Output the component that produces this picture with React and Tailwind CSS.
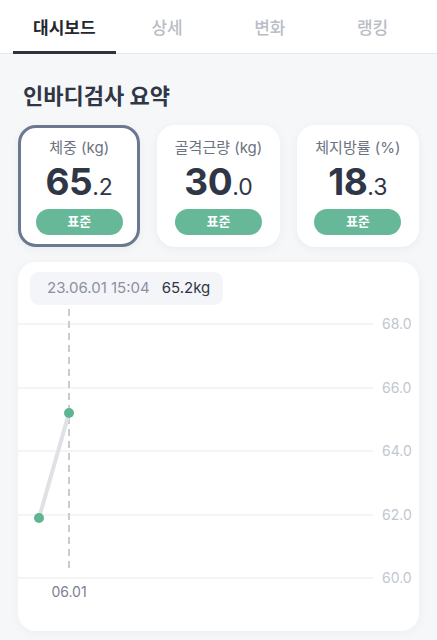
import React from "react";

const tabs = ["대시보드", "상세", "변화", "랭킹"];

const stats = [
  { label: "체중 (kg)", whole: "65", frac: ".2", active: true },
  { label: "골격근량 (kg)", whole: "30", frac: ".0" },
  { label: "체지방률 (%)", whole: "18", frac: ".3" },
];

const grid = [
  { y: 19, v: "68.0" },
  { y: 83, v: "66.0" },
  { y: 146, v: "64.0" },
  { y: 210, v: "62.0" },
  { y: 273, v: "60.0" },
];

const StatCard = ({ label, whole, frac, active }) => (
  <div
    className={`w-[123px] h-[122px] rounded-[18px] bg-white flex flex-col items-center shadow-[0_2px_10px_rgba(0,0,0,0.05)] ${
      active ? "border-[3px] border-[#6b7890] pt-[9px]" : "pt-[12px]"
    }`}
  >
    <div className="text-[15px] text-[#6b7280] leading-[22px]">{label}</div>
    <div className="mt-[4px] h-[38px] flex items-baseline text-[#2f3646] leading-[38px]">
      <span className="text-[37px] font-bold tracking-[-0.5px]">{whole}</span>
      <span className="text-[23px]">{frac}</span>
    </div>
    <div className="mt-[8px] w-[87px] h-[26px] rounded-full bg-[#66b899] text-white text-[13px] font-bold flex items-center justify-center">
      표준
    </div>
  </div>
);

const App = () => {
  return (
    <div
      className="w-[437px] h-[640px] bg-[#f6f7f9] overflow-hidden"
      style={{ fontFamily: 'Inter, "Noto Sans CJK KR", sans-serif' }}
    >
      {/* tabs */}
      <div className="bg-white h-[54px] border-b border-[#e6e8ec] flex px-[13px]">
        {tabs.map((t, i) => (
          <div key={t} className="w-[103px] relative flex items-center justify-center pt-[5px]">
            <span
              className={`text-[17px] ${i === 0 ? "font-bold text-[#23272f]" : "font-medium text-[#b9bdc5]"}`}
            >
              {t}
            </span>
            {i === 0 && <div className="absolute left-0 right-0 bottom-[-1px] h-[3px] bg-[#2d323c]" />}
          </div>
        ))}
      </div>

      {/* title */}
      <div className="px-[23px] pt-[26px] text-[22px] font-bold text-[#2f3646] leading-[32px]">
        인바디검사 요약
      </div>

      {/* stat cards */}
      <div className="mt-[13px] px-[18px] flex gap-[17px]">
        {stats.map((s) => (
          <StatCard key={s.label} {...s} />
        ))}
      </div>

      {/* chart */}
      <div className="mt-[15px] mx-[18px] w-[401px] h-[369px] bg-white rounded-[18px] shadow-[0_2px_12px_rgba(0,0,0,0.04)] pt-[10px]">
        <div className="ml-[12px] w-[193px] h-[33px] rounded-[9px] bg-[#f4f5f8] flex items-center pl-[17px] text-[15px]">
          <span className="text-[#8b91a0]">23.06.01 15:04</span>
          <span className="ml-[12px] text-[#2f3646]">65.2kg</span>
        </div>
        <svg width="401" height="326" className="block">
          {grid.map((g) => (
            <g key={g.v}>
              <line x1="0" x2="355" y1={g.y} y2={g.y} stroke="#e9eaee" strokeWidth="1" />
              <text x="364" y={g.y + 5} fontSize="14" fill="#c3c6cf" fontFamily="Inter, sans-serif">
                {g.v}
              </text>
            </g>
          ))}
          <line x1="51" x2="51" y1="4" y2="268" stroke="#c9ccd2" strokeWidth="2" strokeDasharray="7 5" />
          <line x1="21" y1="213" x2="51" y2="108" stroke="#e0e1e5" strokeWidth="4" strokeLinecap="round" />
          <circle cx="21" cy="213" r="5" fill="#5fb592" />
          <circle cx="51" cy="108" r="5" fill="#5fb592" />
          <text x="51" y="292" fontSize="14" fill="#7a8193" textAnchor="middle" fontFamily="Inter, sans-serif">
            06.01
          </text>
        </svg>
      </div>
    </div>
  );
};

export default App;
